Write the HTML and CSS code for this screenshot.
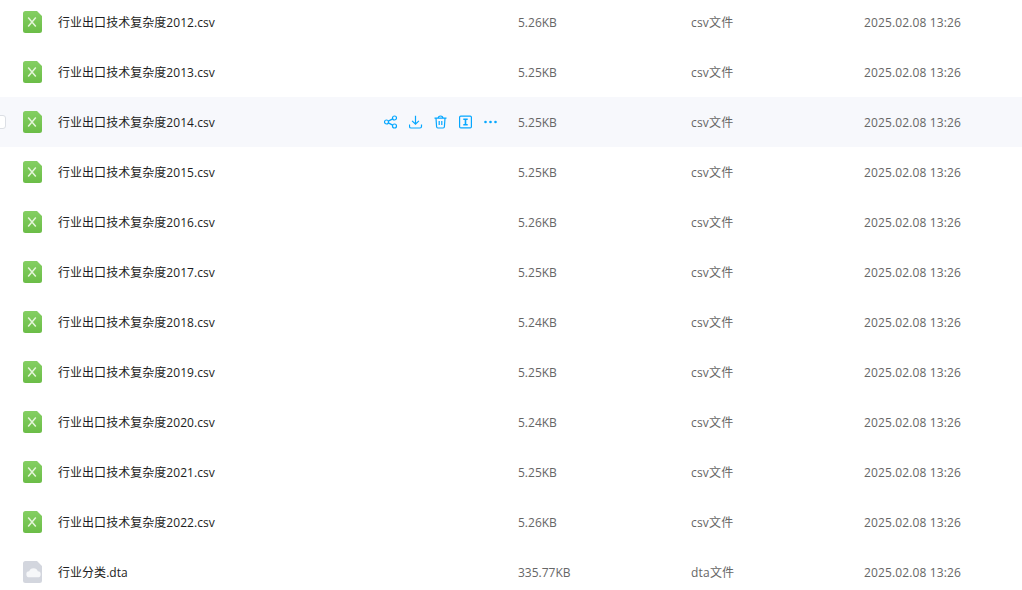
FILE: index.html
```html
<!DOCTYPE html>
<html lang="zh-CN">
<head>
<meta charset="utf-8">
<title>文件列表</title>
<link rel="stylesheet" href="styles.css">
</head>
<body>
<svg class="defs" width="0" height="0" aria-hidden="true">
  <defs>
    <linearGradient id="green" x1="0" y1="0" x2="0" y2="1"><stop offset="0" stop-color="#84cf62"/><stop offset="1" stop-color="#6bbd47"/></linearGradient>
    <symbol id="xls" viewBox="0 0 19 22">
      <path d="M2.500 0H14l5 5v14.500a2.500 2.500 0 0 1-2.500 2.500h-14A2.500 2.500 0 0 1 0 19.500v-17A2.500 2.500 0 0 1 2.500 0z" fill="url(#green)"/>
      <path d="M5.200 6.500l7.600 9M12.800 6.500l-7.600 9" stroke="#e4f4da" stroke-width="1.500" fill="none"/>
    </symbol>
    <symbol id="dta" viewBox="0 0 19 22">
      <path d="M2.500 0H14l5 5v14.500a2.500 2.500 0 0 1-2.500 2.500h-14A2.500 2.500 0 0 1 0 19.500v-17A2.500 2.500 0 0 1 2.500 0z" fill="#d3d6de"/>
      <path d="M6.500 16.300a3 3 0 0 1-.3-6 4.500 4.500 0 0 1 8.600 0 3 3 0 0 1-.3 6z" fill="#f6f7f9"/>
    </symbol>
  </defs>
</svg>
<main class="list">
  <div class="row"><div class="name"><svg class="file"><use href="#xls"/></svg><span>行业出口技术复杂度2012.csv</span></div><div class="size">5.26KB</div><div class="type">csv文件</div><div class="date">2025.02.08 13:26</div></div>
  <div class="row"><div class="name"><svg class="file"><use href="#xls"/></svg><span>行业出口技术复杂度2013.csv</span></div><div class="size">5.25KB</div><div class="type">csv文件</div><div class="date">2025.02.08 13:26</div></div>
  <div class="row hover">
    <div class="name">
      <i class="check"></i>
      <svg class="file"><use href="#xls"/></svg><span>行业出口技术复杂度2014.csv</span>
      <div class="actions">
        <svg viewBox="0.5 0 14 14"><circle cx="3" cy="7" r="2"/><circle cx="11" cy="3" r="2"/><circle cx="11" cy="11" r="2"/><path d="M4.800 6.100L9.200 3.900M4.800 7.900l4.400 2.200"/></svg>
        <svg viewBox="0.5 0 14 14"><path d="M7 .8v8.200M3.600 5.800L7 9.200l3.400-3.400M1 9.500v2a1.500 1.500 0 0 0 1.500 1.500h9a1.500 1.500 0 0 0 1.500-1.500v-2"/></svg>
        <svg viewBox="0.5 0 14 14"><path d="M1 3.200h12M4.600 3.200C4.600 1.800 5.600 1 7 1s2.400.8 2.400 2.200M2.500 3.200l.6 8.600A1.300 1.300 0 0 0 4.400 13h5.200a1.300 1.300 0 0 0 1.300-1.200l.6-8.600M5.700 6v4M8.300 6v4"/></svg>
        <svg viewBox="0.5 0 14 14"><rect x="1.100" y="1.100" width="11.800" height="11.800" rx="1.200"/><path class="bold" d="M4.800 4.300h4.400M4.800 9.700h4.400M7 4.300v5.400"/></svg>
        <svg class="more" viewBox="0.5 0 14 14"><circle cx="2" cy="7" r="1.300"/><circle cx="7" cy="7" r="1.300"/><circle cx="12" cy="7" r="1.300"/></svg>
      </div>
    </div>
    <div class="size">5.25KB</div><div class="type">csv文件</div><div class="date">2025.02.08 13:26</div>
  </div>
  <div class="row"><div class="name"><svg class="file"><use href="#xls"/></svg><span>行业出口技术复杂度2015.csv</span></div><div class="size">5.25KB</div><div class="type">csv文件</div><div class="date">2025.02.08 13:26</div></div>
  <div class="row"><div class="name"><svg class="file"><use href="#xls"/></svg><span>行业出口技术复杂度2016.csv</span></div><div class="size">5.26KB</div><div class="type">csv文件</div><div class="date">2025.02.08 13:26</div></div>
  <div class="row"><div class="name"><svg class="file"><use href="#xls"/></svg><span>行业出口技术复杂度2017.csv</span></div><div class="size">5.25KB</div><div class="type">csv文件</div><div class="date">2025.02.08 13:26</div></div>
  <div class="row"><div class="name"><svg class="file"><use href="#xls"/></svg><span>行业出口技术复杂度2018.csv</span></div><div class="size">5.24KB</div><div class="type">csv文件</div><div class="date">2025.02.08 13:26</div></div>
  <div class="row"><div class="name"><svg class="file"><use href="#xls"/></svg><span>行业出口技术复杂度2019.csv</span></div><div class="size">5.25KB</div><div class="type">csv文件</div><div class="date">2025.02.08 13:26</div></div>
  <div class="row"><div class="name"><svg class="file"><use href="#xls"/></svg><span>行业出口技术复杂度2020.csv</span></div><div class="size">5.24KB</div><div class="type">csv文件</div><div class="date">2025.02.08 13:26</div></div>
  <div class="row"><div class="name"><svg class="file"><use href="#xls"/></svg><span>行业出口技术复杂度2021.csv</span></div><div class="size">5.25KB</div><div class="type">csv文件</div><div class="date">2025.02.08 13:26</div></div>
  <div class="row"><div class="name"><svg class="file"><use href="#xls"/></svg><span>行业出口技术复杂度2022.csv</span></div><div class="size">5.26KB</div><div class="type">csv文件</div><div class="date">2025.02.08 13:26</div></div>
  <div class="row"><div class="name"><svg class="file"><use href="#dta"/></svg><span>行业分类.dta</span></div><div class="size">335.77KB</div><div class="type">dta文件</div><div class="date">2025.02.08 13:26</div></div>
</main>
</body>
</html>
```
FILE: styles.css
```css
html, body {
  margin: 0;
  height: 100%;
  overflow: hidden;
  background: #fff;
}
body {
  font-family: "Open Sans", "Noto Sans CJK SC", sans-serif;
  font-size: 12px;
  color: #666;
}
.defs { display: block; }
.list { margin-top: -3px; }
.row {
  display: grid;
  grid-template-columns: 518px 173px 173px 1fr;
  align-items: center;
  height: 50px;
}
.hover { background: #f7f8fc; }
.name {
  display: flex;
  align-items: center;
  position: relative;
  padding-left: 23px;
  color: #1c1d22;
  letter-spacing: .04px;
}
.type { letter-spacing: .2px; }
.date { letter-spacing: .13px; }
.file {
  width: 19px;
  height: 22px;
  margin-right: 16px;
  flex: none;
}
.check {
  position: absolute;
  left: -7px;
  top: 50%;
  width: 11px;
  height: 12px;
  margin-top: -7px;
  border: 1px solid #dcdfe5;
  border-radius: 3px;
  background: #fff;
}
.actions {
  position: absolute;
  left: 384px;
  top: 50%;
  margin-top: -7px;
  display: flex;
  gap: 11px;
}
.actions svg {
  width: 14px;
  height: 14px;
  fill: none;
  stroke: #06a7ff;
  stroke-width: 1.200;
}
.actions .bold { stroke-width: 1.600; }
.actions .more { fill: #06a7ff; stroke: none; }
```
